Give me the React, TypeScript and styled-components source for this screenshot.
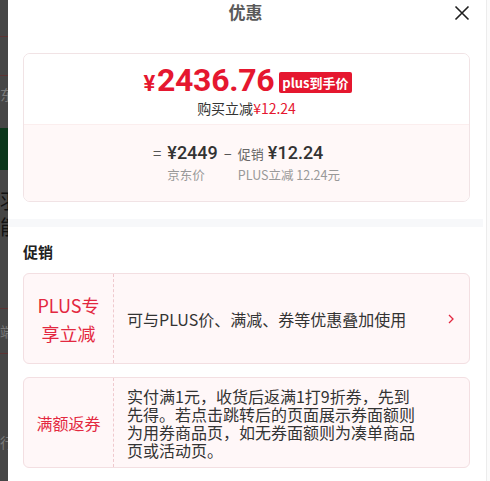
import React from 'react';
import styled, { createGlobalStyle } from 'styled-components';

const GlobalStyle = createGlobalStyle`
  html, body {
    margin: 0;
    padding: 0;
    background: #ffffff;
    overflow: hidden;
  }
  * {
    box-sizing: border-box;
  }
`;

const CJK = `"Noto Sans CJK SC", "Noto Sans", sans-serif`;
const NUM = `Roboto, "Noto Sans CJK SC", sans-serif`;
const RED = '#e5172f';
const LABEL_RED = '#e32840';

const PROMOS = [
  {
    label: 'PLUS专\n享立减',
    labelSize: 18,
    text: '可与PLUS价、满减、券等优惠叠加使用',
    arrow: true,
  },
  {
    label: '满额返券',
    labelSize: 16,
    text: '实付满1元，收货后返满1打9折券，先到先得。若点击跳转后的页面展示券面额则为用券商品页，如无券面额则为凑单商品页或活动页。',
    arrow: false,
  },
];

export default function App() {
  return (
    <>
      <GlobalStyle />
      <Page>
        <Backdrop>
          <BackdropLine $top={36} />
          <BackdropLine $top={38} />
          <BackdropText $top={10}>东</BackdropText>
          <BackdropGreen />
          <BackdropGlyph $top={20}>羽</BackdropGlyph>
          <BackdropGlyph $top={4}>能</BackdropGlyph>
          <BackdropLine $top={70} />
          <BackdropText $top={14}>端</BackdropText>
          <BackdropLine $top={14} />
          <BackdropText $top={80}>行</BackdropText>
        </Backdrop>

        <Panel>
          <Header>
            <span />
            <Title>优惠</Title>
            <CloseButton aria-label="关闭">
              <svg width="16" height="16" viewBox="0 0 16 16">
                <path d="M1.5 1.5 L14.5 14.5 M14.5 1.5 L1.5 14.5" stroke="#1f1f1f" strokeWidth="1.6" fill="none" />
              </svg>
            </CloseButton>
          </Header>

          <PriceCard>
            <PriceTop>
              <PriceRow>
                <FinalPrice>
                  <Yen>¥</Yen>
                  <span>2436.76</span>
                </FinalPrice>
                <PlusBadge>plus到手价</PlusBadge>
              </PriceRow>
              <Saving>
                购买立减<SavingAmount>¥12.24</SavingAmount>
              </Saving>
            </PriceTop>
            <PriceBottom>
              <Formula>
                <Operator>=</Operator>
                <Term>
                  <TermValue>¥2449</TermValue>
                  <TermLabel>京东价</TermLabel>
                </Term>
                <Operator>–</Operator>
                <Term>
                  <TermValue>
                    <TermPrefix>促销</TermPrefix>
                    <span>¥12.24</span>
                  </TermValue>
                  <TermLabel>PLUS立减 12.24元</TermLabel>
                </Term>
              </Formula>
            </PriceBottom>
          </PriceCard>

          <Band />

          <PromoSection>
            <SectionTitle>促销</SectionTitle>
            <PromoList>
              {PROMOS.map((promo) => (
                <PromoCard key={promo.label}>
                  <PromoLabel $size={promo.labelSize}>{promo.label}</PromoLabel>
                  <PromoBody>
                    <PromoText>{promo.text}</PromoText>
                    {promo.arrow && (
                      <Chevron width="8" height="12" viewBox="0 0 8 12">
                        <polyline points="2,2 6,6 2,10" fill="none" stroke={LABEL_RED} strokeWidth="1.3" />
                      </Chevron>
                    )}
                  </PromoBody>
                </PromoCard>
              ))}
            </PromoList>
          </PromoSection>
        </Panel>

        <Scrollbar />
      </Page>
    </>
  );
}

const Page = styled.div`
  display: flex;
  width: 490px;
  height: 481px;
  overflow: hidden;
  font-family: ${CJK};
`;

const Backdrop = styled.div`
  width: 8px;
  flex-shrink: 0;
  background: #464646;
  display: flex;
  flex-direction: column;
  overflow: hidden;
`;

const BackdropLine = styled.div<{ $top: number }>`
  margin-top: ${(p) => p.$top}px;
  height: 1px;
  flex-shrink: 0;
  background: #5c3434;
`;

const BackdropText = styled.div<{ $top: number }>`
  margin-top: ${(p) => p.$top}px;
  width: 8px;
  height: 16px;
  flex-shrink: 0;
  overflow: hidden;
  font-size: 14px;
  line-height: 16px;
  color: #7a7a7a;
  white-space: nowrap;
`;

const BackdropGreen = styled.div`
  margin-top: 26px;
  height: 42px;
  flex-shrink: 0;
  background: #0b361b;
`;

const BackdropGlyph = styled.div<{ $top: number }>`
  margin-top: ${(p) => p.$top}px;
  width: 8px;
  height: 22px;
  flex-shrink: 0;
  overflow: hidden;
  font-size: 20px;
  line-height: 22px;
  color: #111;
  white-space: nowrap;
`;

const Panel = styled.div`
  width: 475px;
  flex-shrink: 0;
  background: #ffffff;
  display: flex;
  flex-direction: column;
`;

const Scrollbar = styled.div`
  flex: 1;
  background: #fbfbfb;
  border-left: 3px solid #ffffff;
  box-shadow: inset 1px 0 0 #ececec;
`;

const Header = styled.div`
  height: 24px;
  display: grid;
  grid-template-columns: 1fr auto 1fr;
  align-items: center;
`;

const Title = styled.div`
  font-size: 17px;
  font-weight: 700;
  color: #5a5a5a;
  line-height: 24px;
`;

const CloseButton = styled.button`
  justify-self: end;
  margin-right: 13px;
  padding: 0;
  border: none;
  background: none;
  display: flex;
  margin-top: 2px;
`;

const PriceCard = styled.div`
  margin: 29px 13px 0 15px;
  border: 1px solid #f1e3e5;
  border-radius: 7px;
  overflow: hidden;
`;

const PriceTop = styled.div`
  background: #ffffff;
  height: 70px;
  padding-top: 10px;
  display: flex;
  flex-direction: column;
  align-items: center;
`;

const PriceRow = styled.div`
  height: 32px;
  display: flex;
  align-items: center;
  gap: 5px;
  margin-left: 2px;
`;

const FinalPrice = styled.div`
  height: 32px;
  display: flex;
  align-items: baseline;
  font-family: ${NUM};
  font-size: 32px;
  line-height: 32px;
  font-weight: 700;
  color: ${RED};
  letter-spacing: -0.3px;
`;

const Yen = styled.span`
  font-size: 22px;
  line-height: 22px;
  margin-right: 2px;
`;

const PlusBadge = styled.div`
  margin-top: 4px;
  background: ${RED};
  color: #ffffff;
  font-size: 13px;
  font-weight: 700;
  line-height: 21px;
  height: 21px;
  padding: 0 3px;
  border-radius: 2px;
`;

const Saving = styled.div`
  margin-top: 2px;
  height: 20px;
  font-size: 14px;
  line-height: 20px;
  color: #333333;
`;

const SavingAmount = styled.span`
  color: ${RED};
`;

const PriceBottom = styled.div`
  background: #fff8f8;
  border-top: 1px solid #fbeeee;
  height: 77px;
  padding-top: 17px;
  display: flex;
  justify-content: center;
`;

const Formula = styled.div`
  display: flex;
  align-items: flex-start;
  gap: 6px;
`;

const Operator = styled.div`
  font-size: 15px;
  line-height: 22px;
  height: 22px;
  color: #555555;
`;

const Term = styled.div`
  display: flex;
  flex-direction: column;
  gap: 3px;
`;

const TermValue = styled.div`
  height: 22px;
  display: flex;
  align-items: baseline;
  font-family: ${NUM};
  font-size: 18px;
  font-weight: 500;
  line-height: 22px;
  color: #333333;
`;

const TermPrefix = styled.span`
  font-family: ${CJK};
  font-size: 13px;
  font-weight: 400;
  color: #666666;
  margin-right: 4px;
`;

const TermLabel = styled.div`
  height: 16px;
  font-size: 12.5px;
  line-height: 16px;
  color: #999999;
`;

const Band = styled.div`
  margin-top: 17px;
  height: 8px;
  background: #f7f8fa;
`;

const PromoSection = styled.div`
  padding: 15px 13px 0 15px;
`;

const SectionTitle = styled.div`
  height: 20px;
  font-size: 15px;
  font-weight: 700;
  line-height: 20px;
  color: #222222;
`;

const PromoList = styled.div`
  margin-top: 11px;
  display: flex;
  flex-direction: column;
  gap: 13px;
`;

const PromoCard = styled.div`
  display: flex;
  min-height: 91px;
  background: #fff7f8;
  border: 1px solid #f3dfe2;
  border-radius: 6px;
`;

const PromoLabel = styled.div<{ $size: number }>`
  width: 90px;
  flex-shrink: 0;
  display: flex;
  align-items: center;
  justify-content: center;
  text-align: center;
  white-space: pre-line;
  font-size: ${(p) => p.$size}px;
  line-height: 28px;
  color: ${LABEL_RED};
  border-right: 1px dashed #efc9ce;
`;

const PromoBody = styled.div`
  flex: 1;
  display: flex;
  align-items: center;
  padding: 0 14px 0 13px;
`;

const PromoText = styled.div`
  width: 292px;
  font-size: 16px;
  line-height: 18px;
  color: #333333;
`;

const Chevron = styled.svg`
  margin-left: auto;
`;
